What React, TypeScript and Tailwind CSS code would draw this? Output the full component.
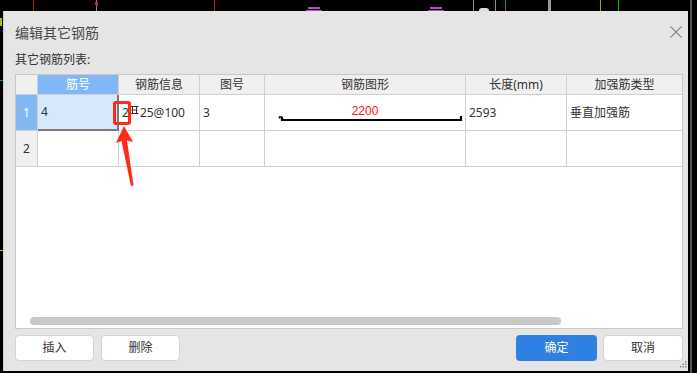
const cols = [
  { w: "w-[22px]", title: "" },
  { w: "w-[81px]", title: "筋号" },
  { w: "w-[81px]", title: "钢筋信息" },
  { w: "w-[65px]", title: "图号" },
  { w: "w-[201px]", title: "钢筋图形" },
  { w: "w-[101px]", title: "长度(mm)" },
  { w: "flex-1", title: "加强筋类型" },
];

const GradeMark = () => (
  <svg width="9" height="10" viewBox="0 0 9 10" className="inline-block mx-[1px] -mt-[6px]">
    <path d="M0.5 1.5H8.5M2.5 1.5V8.5M6.5 1.5V8.5M1.5 5H7.5M0.5 8.5H8.5" stroke="#333" strokeWidth="1" fill="none" />
  </svg>
);

const RebarShape = () => (
  <div className="relative w-full h-full">
    <div className="absolute left-0 right-0 top-[10px] text-center text-[12px] leading-none text-[#ff1010] font-['Liberation_Sans',sans-serif]">
      2200
    </div>
    <svg width="201" height="35" className="absolute left-0 top-0">
      <path d="M17 22V25H196V21" stroke="#000" strokeWidth="2.2" fill="none" />
      <path d="M17.5 22H14.5V23.5" stroke="#000" strokeWidth="1.5" fill="none" />
    </svg>
  </div>
);

export default function App() {
  return (
    <div className="w-[697px] h-[373px] bg-black relative overflow-hidden font-['Noto_Sans','Noto_Sans_CJK_SC',sans-serif] text-[#333]">
      {/* background canvas lines */}
      <div className="absolute left-[33px] top-0 w-px h-[11px] bg-[#b01010]" />
      <div className="absolute left-[96px] top-0 w-px h-[11px] bg-[#888]" />
      <div className="absolute left-[95px] top-[2px] w-[3px] h-[3px] bg-[#e02020]" />
      <div className="absolute left-[214px] top-0 w-px h-[11px] bg-[#c02020]" />
      <div className="absolute left-[308px] top-[7px] w-[12px] h-[2px] bg-[#b050c0]" />
      <div className="absolute left-[306px] top-[10px] w-[16px] h-px bg-[#b050c0]" />
      <div className="absolute left-[430px] top-[7px] w-[12px] h-[2px] bg-[#b050c0]" />
      <div className="absolute left-[428px] top-[10px] w-[16px] h-px bg-[#b050c0]" />
      <div className="absolute left-[479px] top-[8px] w-[10px] h-[3px] rounded-t-full bg-[#ddd]" />
      <div className="absolute left-[473px] top-0 w-px h-[11px] bg-[#888]" />
      <div className="absolute left-[495px] top-0 w-px h-[11px] bg-[#8a0]" />
      <div className="absolute left-[505px] top-0 w-px h-[11px] bg-[#0a0]" />
      <div className="absolute left-[548px] top-0 w-[3px] h-[11px] bg-[#999]" />
      <div className="absolute left-[600px] top-0 w-px h-[11px] bg-[#9a0]" />
      <div className="absolute left-[618px] top-0 w-px h-[11px] bg-[#0b0]" />
      <div className="absolute left-[690px] top-0 w-[2px] h-[373px] bg-[#555]" />
      <div className="absolute left-0 top-[18px] w-[2px] h-[8px] bg-[#9c0]" />
      <div className="absolute left-0 top-[80px] w-[3px] h-px bg-[#0a0]" />
      <div className="absolute left-0 top-[250px] w-[3px] h-px bg-[#9c0]" />

      <div className="pt-[11px] pl-[3px]">
        <div className="w-[685px] h-[360px] bg-[#e5e5e5] border-l border-[#cfcfcf] flex flex-col pl-[11px] pr-[5px] pb-[10px] relative">
          <div className="h-[40px] flex items-center justify-between">
            <span className="text-[14px] text-[#4a4a4a] pt-[2px]">编辑其它钢筋</span>
            <svg width="12" height="12" viewBox="0 0 12 12" className="mr-[1px] mt-[2px]">
              <path d="M0.5 0.5L11.5 11.5M11.5 0.5L0.5 11.5" stroke="#8a8a8a" strokeWidth="1.2" />
            </svg>
          </div>
          <div className="h-[17px] flex items-center text-[12px] text-[#333]">其它钢筋列表:</div>
          <div className="mt-[6px] h-[255px] w-[668px] border border-[#c8c8c8] bg-white flex flex-col text-[12px]">
            {/* header */}
            <div className="flex h-[20px] bg-[#f0f0f0]">
              {cols.map((c, i) => (
                <div
                  key={i}
                  className={`${c.w} h-full border-b border-[#d0d0d0] ${i < cols.length - 1 ? "border-r" : ""} flex items-center justify-center ${i === 1 ? "bg-[#80b8f5] text-white" : ""}`}
                >
                  {c.title}
                </div>
              ))}
            </div>
            {/* row 1 */}
            <div className="flex h-[36px] relative">
              <div className="w-[22px] h-full border-r border-b border-[#d0d0d0] bg-[#80b8f5] text-white flex items-center justify-center">1</div>
              <div className="w-[81px] h-full border-r-2 border-b-2 border-[#7a7a7a] bg-[#d5e8fc] flex items-center pl-[3px]">4</div>
              <div className="w-[81px] h-full border-r border-b border-[#d0d0d0] flex items-center pl-[3px]">
                2<GradeMark />25@100
              </div>
              <div className="w-[65px] h-full border-r border-b border-[#d0d0d0] flex items-center pl-[3px]">3</div>
              <div className="w-[201px] h-full border-r border-b border-[#d0d0d0]">
                <RebarShape />
              </div>
              <div className="w-[101px] h-full border-r border-b border-[#d0d0d0] flex items-center pl-[3px]">2593</div>
              <div className="flex-1 h-full border-b border-[#d0d0d0] flex items-center pl-[3px]">垂直加强筋</div>
            </div>
            {/* row 2 */}
            <div className="flex h-[36px]">
              <div className="w-[22px] h-full border-r border-b border-[#d0d0d0] bg-[#f0f0f0] flex items-center justify-center">2</div>
              <div className="w-[81px] h-full border-r border-b border-[#d0d0d0]" />
              <div className="w-[81px] h-full border-r border-b border-[#d0d0d0]" />
              <div className="w-[65px] h-full border-r border-b border-[#d0d0d0]" />
              <div className="w-[201px] h-full border-r border-b border-[#d0d0d0]" />
              <div className="w-[101px] h-full border-r border-b border-[#d0d0d0]" />
              <div className="flex-1 h-full border-b border-[#d0d0d0]" />
            </div>
            <div className="flex-1" />
            <div className="pl-[14px] pb-[3px]">
              <div className="w-[531px] h-[8px] rounded-full bg-[#c8c8c8]" />
            </div>
          </div>
          <div className="mt-[6px] flex h-[26px] text-[12px]">
            <button className="w-[79px] h-full bg-white border border-[#d4d4d4] rounded-[4px] text-[#333]">插入</button>
            <button className="ml-[7px] w-[79px] h-full bg-white border border-[#d4d4d4] rounded-[4px] text-[#333]">删除</button>
            <div className="flex-1" />
            <button className="w-[81px] h-full bg-[#2f80e2] rounded-[4px] text-white">确定</button>
            <button className="ml-[6px] w-[80px] h-full bg-white border border-[#d4d4d4] rounded-[4px] text-[#333]">取消</button>
          </div>
          {/* resize grip */}
          <svg width="7" height="7" viewBox="0 0 7 7" className="absolute right-[1px] bottom-[3px]">
            <rect x="5" y="0" width="1.5" height="1.5" fill="#888" />
            <rect x="2.5" y="2.5" width="1.5" height="1.5" fill="#888" />
            <rect x="5" y="2.5" width="1.5" height="1.5" fill="#888" />
            <rect x="0" y="5" width="1.5" height="1.5" fill="#888" />
            <rect x="2.5" y="5" width="1.5" height="1.5" fill="#888" />
            <rect x="5" y="5" width="1.5" height="1.5" fill="#888" />
          </svg>
        </div>
      </div>

      {/* red annotation over the cell */}
      <div className="absolute left-[113px] top-[101px] w-[18px] h-[24px] border-[3px] border-[#ff2a1a] rounded-[3px]" />
      <svg width="30" height="66" viewBox="0 0 30 66" className="absolute left-[110px] top-[124px]">
        <path d="M14 2L6 19L11.5 17L21 62L23.5 61.5L17 16.5L23 18Z" fill="#ff2a1a" />
      </svg>
    </div>
  );
}
